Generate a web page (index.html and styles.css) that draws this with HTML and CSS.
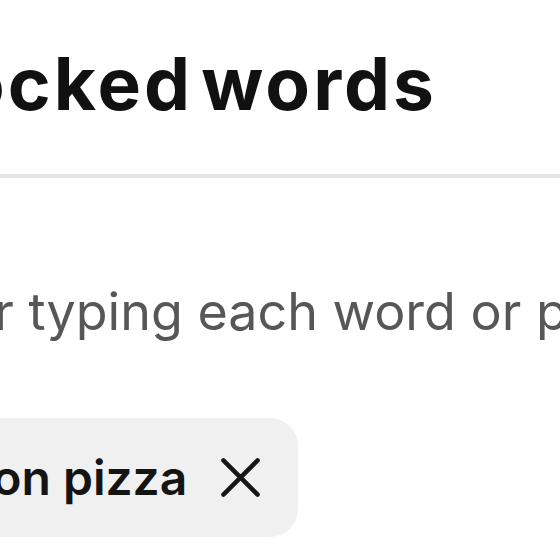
FILE: index.html
```html
<!DOCTYPE html>
<html lang="en">
<head>
<meta charset="utf-8">
<title>Blocked words</title>
<link rel="stylesheet" href="styles.css">
</head>
<body>
<main class="panel">
  <h1 class="title">Blocked words</h1>
  <hr class="divider">
  <p class="hint">Press enter after typing each word or phrase</p>
  <div class="tags">
    <span class="tag">
      <span class="tag-label">pineapple on pizza</span>
      <button class="tag-remove" aria-label="Remove">
        <svg viewBox="0 0 24 24" width="41" height="41" fill="none" stroke="#161616" stroke-width="2.6" stroke-linecap="round"><path d="M2 2L22 22M22 2L2 22"/></svg>
      </button>
    </span>
  </div>
</main>
</body>
</html>
```
FILE: styles.css
```css
html, body {
  margin: 0;
  background: #ffffff;
  overflow: hidden;
}
.panel {
  font-family: "Inter", "Liberation Sans", sans-serif;
  white-space: nowrap;
}
.title {
  margin: 41px 0 0 -114px;
  font-size: 73px;
  line-height: 86px;
  font-weight: 700;
  letter-spacing: 3px;
  word-spacing: -12px;
  color: #111111;
}
.divider {
  margin: 47px 0 0;
  border: 0;
  height: 4px;
  background: #e6e6e6;
}
.hint {
  margin: 102px 0 0 -393px;
  font-size: 52px;
  line-height: 64px;
  font-weight: 400;
  color: #575757;
}
.tags {
  margin: 74px 0 0 -289px;
  display: flex;
}
.tag {
  display: inline-flex;
  align-items: center;
  gap: 33px;
  height: 119px;
  padding: 0 37px 0 40px;
  background: #f0f0f0;
  border-radius: 28px;
}
.tag-label {
  font-size: 48px;
  line-height: 64px;
  font-weight: 600;
  color: #141414;
}
.tag-remove {
  display: flex;
  padding: 0;
  border: 0;
  background: none;
}
```
